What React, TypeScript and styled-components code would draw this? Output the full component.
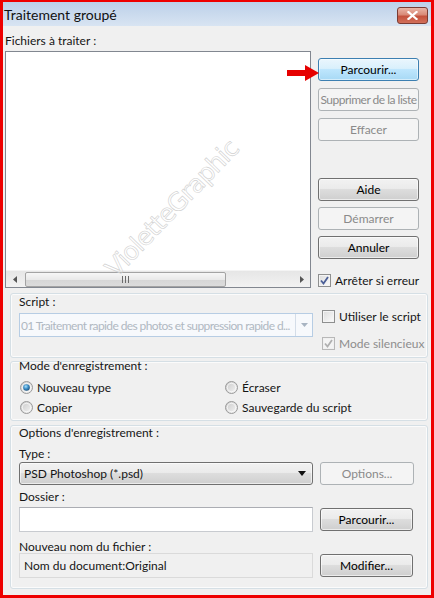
import React from "react";
import styled, { createGlobalStyle, css } from "styled-components";

const GlobalStyle = createGlobalStyle`
  html, body { margin: 0; padding: 0; background: #fff; }
  body { font-family: Lato, "Noto Sans", sans-serif; font-size: 12px; color: #151515; }
  * { box-sizing: border-box; }
`;

const Frame = styled.div`
  position: relative;
  width: 434px;
  height: 598px;
  border: 3px solid #ee0000;
  border-top-width: 2px;
  background: #f0f0f0;
  overflow: hidden;
`;

const TitleBar = styled.div`
  height: 24px;
  display: flex;
  align-items: center;
  justify-content: space-between;
  padding: 0 3px 0 1px;
  background: linear-gradient(#bcd0e9, #d8e4f2);
`;

const TitleText = styled.span`
  font-size: 14px;
  color: #111;
`;

const CloseButton = styled.div`
  width: 31px;
  height: 17px;
  border: 1px solid #7a3b33;
  border-radius: 3px;
  background: linear-gradient(#eab4a6 0%, #d98a78 45%, #c4513d 55%, #d2705a 100%);
  display: flex;
  align-items: center;
  justify-content: center;
  margin-top: 2px;
`;

const Body = styled.div`
  padding: 7px 5px 0 2px;
`;

const Label = styled.div<{ $mt?: number }>`
  height: 15px;
  line-height: 15px;
  white-space: nowrap;
  margin-top: ${(p) => p.$mt ?? 0}px;
`;

const TopSection = styled.div`
  display: grid;
  grid-template-columns: 306px 101px;
  column-gap: 7px;
  margin-top: 3px;
`;

const ListBox = styled.div`
  position: relative;
  height: 237px;
  border: 1px solid #828790;
  background: #fff;
  display: flex;
  flex-direction: column;
  justify-content: flex-end;
  overflow: hidden;
`;

const Watermark = styled.div`
  position: absolute;
  z-index: 2;
  left: 104px;
  top: 206px;
  font-family: "DejaVu Sans", sans-serif;
  font-size: 25px;
  line-height: 29px;
  color: transparent;
  -webkit-text-stroke: 0.6px #d0d0d0;
  transform: rotate(-46deg);
  transform-origin: left center;
  white-space: nowrap;
  letter-spacing: -1px;
  pointer-events: none;
`;

const ScrollBar = styled.div`
  position: relative;
  height: 17px;
  display: flex;
  align-items: center;
  background: linear-gradient(#e6e6e6, #f2f2f2);
  border-top: 1px solid #f4f4f4;
`;

const ArrowCell = styled.div`
  width: 17px;
  height: 17px;
  display: flex;
  align-items: center;
  justify-content: center;
`;

const Thumb = styled.div`
  width: 201px;
  height: 15px;
  margin-left: 2px;
  border: 1px solid #a3a3a3;
  border-radius: 2px;
  background: linear-gradient(#f6f6f6 0%, #e9e9e9 50%, #d6d6d6 52%, #dcdcdc 100%);
  display: flex;
  align-items: center;
  justify-content: center;
`;

const Spacer = styled.div`
  flex: 1;
`;

const RightColumn = styled.div`
  display: flex;
  flex-direction: column;
  padding-top: 7px;
`;

const ButtonStack = styled.div<{ $gap: number; $mt?: number }>`
  display: flex;
  flex-direction: column;
  gap: ${(p) => p.$gap}px;
  margin-top: ${(p) => p.$mt ?? 0}px;
`;

type Variant = "normal" | "default" | "disabled";

const Button = styled.div<{ $variant?: Variant; $w?: number; $tight?: boolean }>`
  width: ${(p) => (p.$w ? `${p.$w}px` : "100%")};
  height: 23px;
  border-radius: 3px;
  display: flex;
  align-items: center;
  justify-content: center;
  white-space: nowrap;
  letter-spacing: ${(p) => (p.$tight ? "-0.5px" : "0")};
  ${(p) =>
    p.$variant === "default"
      ? css`
          border: 1px solid #3c7fb1;
          background: linear-gradient(#eaf6fd 0%, #d9f0fc 45%, #bee6fd 50%, #a7d9f5 100%);
          box-shadow: inset 0 0 0 1px rgba(255, 255, 255, 0.5);
          color: #000;
        `
      : p.$variant === "disabled"
      ? css`
          border: 1px solid #adb2b5;
          background: #f4f4f4;
          color: #8a8a8a;
        `
      : css`
          border: 1px solid #707070;
          background: linear-gradient(#f2f2f2 0%, #ebebeb 45%, #dddddd 50%, #cfcfcf 100%);
          box-shadow: inset 0 0 0 1px rgba(255, 255, 255, 0.6);
          color: #000;
        `}
`;

const CheckRow = styled.div<{ $disabled?: boolean }>`
  display: flex;
  align-items: center;
  gap: 4px;
  height: 15px;
  white-space: nowrap;
  color: ${(p) => (p.$disabled ? "#8d8d8d" : "#151515")};
`;

const CheckBoxBox = styled.span<{ $disabled?: boolean }>`
  width: 13px;
  height: 13px;
  border: 1px solid ${(p) => (p.$disabled ? "#b8b8b8" : "#8e8f8f")};
  background: ${(p) =>
    p.$disabled ? "#f4f4f4" : "linear-gradient(135deg, #dcdcdc, #fbfbfb)"};
  box-shadow: inset 0 0 0 1px ${(p) => (p.$disabled ? "#f0f0f0" : "#f4f4f4")};
  display: flex;
  align-items: center;
  justify-content: center;
  flex-shrink: 0;
`;

const Group = styled.div<{ $h: number; $mt: number }>`
  margin: ${(p) => p.$mt}px 0 0 5px;
  width: 418px;
  height: ${(p) => p.$h}px;
  border: 1px solid #d5dfe5;
  border-radius: 3px;
  box-shadow: inset 0 0 0 1px #fbfbfb;
  padding: 0 0 0 8px;
`;

const ScriptGrid = styled.div`
  display: grid;
  grid-template-columns: 294px 1fr;
  column-gap: 9px;
  margin-top: 4px;
`;

const ComboDisabled = styled.div`
  height: 24px;
  border: 1px solid #b7cde4;
  background: #f7f9fc;
  display: flex;
  align-items: center;
  color: #b0b8c2;
  white-space: nowrap;
  overflow: hidden;
  padding-left: 1px;
  letter-spacing: -0.6px;
`;

const ComboText = styled.span`
  flex: 1;
  overflow: hidden;
`;

const ComboArrow = styled.div`
  width: 17px;
  height: 100%;
  border-left: 1px solid #d4dde8;
  display: flex;
  align-items: center;
  justify-content: center;
`;

const ScriptChecks = styled.div`
  display: flex;
  flex-direction: column;
  gap: 12px;
  margin-top: -4px;
`;

const RadioGrid = styled.div`
  display: grid;
  grid-template-columns: 205px 1fr;
  row-gap: 5px;
  margin-top: 7px;
  padding-left: 1px;
`;

const RadioRow = styled.div`
  display: flex;
  align-items: center;
  gap: 4px;
  height: 15px;
  white-space: nowrap;
`;

const FieldRow = styled.div<{ $mt?: number }>`
  display: grid;
  grid-template-columns: 294px auto;
  column-gap: 7px;
  align-items: center;
  margin-top: ${(p) => p.$mt ?? 0}px;
`;

const SelectBox = styled.div`
  height: 23px;
  border: 1px solid #707070;
  border-radius: 3px;
  background: linear-gradient(#f2f2f2 0%, #ebebeb 45%, #dddddd 50%, #cfcfcf 100%);
  box-shadow: inset 0 0 0 1px rgba(255, 255, 255, 0.6);
  display: flex;
  align-items: center;
  padding: 0 6px 0 4px;
  justify-content: space-between;
`;

const TextInput = styled.div`
  height: 25px;
  border: 1px solid #c8cbd0;
  border-top-color: #abadb3;
  background: #fff;
`;

const ReadOnlyField = styled.div`
  height: 25px;
  border: 1px solid #dadada;
  background: #f0f0f0;
  display: flex;
  align-items: center;
  padding-left: 4px;
`;

const RedArrow = styled.svg`
  position: absolute;
  left: 284px;
  top: 63px;
`;

const CheckMark = ({ color }: { color: string }) => (
  <svg width="9" height="9" viewBox="0 0 9 9">
    <path d="M1 4.5 L3.5 7.5 L8 1" fill="none" stroke={color} strokeWidth="1.8" />
  </svg>
);

const CheckBox = ({
  checked,
  disabled,
  label,
}: {
  checked?: boolean;
  disabled?: boolean;
  label: string;
}) => (
  <CheckRow $disabled={disabled}>
    <CheckBoxBox $disabled={disabled}>
      {checked && <CheckMark color={disabled ? "#b0b0b0" : "#4b5f97"} />}
    </CheckBoxBox>
    {label}
  </CheckRow>
);

const Radio = ({ checked, label }: { checked?: boolean; label: string }) => (
  <RadioRow>
    <svg width="13" height="13" viewBox="0 0 13 13">
      <defs>
        <linearGradient id="rg" x1="0" y1="0" x2="1" y2="1">
          <stop offset="0" stopColor="#c8c8c8" />
          <stop offset="1" stopColor="#f6f6f6" />
        </linearGradient>
        <radialGradient id="rdot" cx="0.4" cy="0.35" r="0.7">
          <stop offset="0" stopColor="#a9e1fb" />
          <stop offset="0.5" stopColor="#3c8fc9" />
          <stop offset="1" stopColor="#1c4e76" />
        </radialGradient>
      </defs>
      <circle cx="6.5" cy="6.5" r="6" fill="url(#rg)" stroke="#9a9a9a" strokeWidth="1" />
      <circle cx="6.5" cy="6.5" r="4.2" fill="none" stroke="#fafafa" strokeWidth="0.8" />
      {checked && <circle cx="6.5" cy="6.5" r="3.3" fill="url(#rdot)" />}
    </svg>
    {label}
  </RadioRow>
);

export default function App() {
  return (
    <>
      <GlobalStyle />
      <Frame>
        <TitleBar>
          <TitleText>Traitement groupé</TitleText>
          <CloseButton>
            <svg width="11" height="9" viewBox="0 0 11 9">
              <path d="M1.5 1 L9.5 8 M9.5 1 L1.5 8" stroke="#fff" strokeWidth="2.2" strokeLinecap="square" />
            </svg>
          </CloseButton>
        </TitleBar>
        <Body>
          <Label>Fichiers à traiter :</Label>
          <TopSection>
            <ListBox>
              <Watermark>VioletteGraphic</Watermark>
              <ScrollBar>
                <ArrowCell>
                  <svg width="4" height="7" viewBox="0 0 4 7">
                    <path d="M4 0 L0 3.5 L4 7 Z" fill="#555" />
                  </svg>
                </ArrowCell>
                <Thumb>
                  <svg width="7" height="7" viewBox="0 0 7 7">
                    <path d="M0.5 0 V7 M3.5 0 V7 M6.5 0 V7" stroke="#6b6b6b" strokeWidth="1" />
                  </svg>
                </Thumb>
                <Spacer />
                <ArrowCell>
                  <svg width="4" height="7" viewBox="0 0 4 7">
                    <path d="M0 0 L4 3.5 L0 7 Z" fill="#555" />
                  </svg>
                </ArrowCell>
              </ScrollBar>
            </ListBox>
            <RightColumn>
              <ButtonStack $gap={7}>
                <Button $variant="default">Parcourir...</Button>
                <Button $variant="disabled" $tight>Supprimer de la liste</Button>
                <Button $variant="disabled">Effacer</Button>
              </ButtonStack>
              <ButtonStack $gap={6} $mt={37}>
                <Button>Aide</Button>
                <Button $variant="disabled">Démarrer</Button>
                <Button>Annuler</Button>
              </ButtonStack>
              <ButtonStack $gap={0} $mt={14}>
                <CheckBox checked label="Arrêter si erreur" />
              </ButtonStack>
            </RightColumn>
          </TopSection>
          <Group $h={65} $mt={5}>
            <Label $mt={0}>Script :</Label>
            <ScriptGrid>
              <ComboDisabled>
                <ComboText>01 Traitement rapide des photos et suppression rapide d...</ComboText>
                <ComboArrow>
                  <svg width="7" height="4" viewBox="0 0 7 4">
                    <path d="M0 0 H7 L3.5 4 Z" fill="#a8b4c2" />
                  </svg>
                </ComboArrow>
              </ComboDisabled>
              <ScriptChecks>
                <CheckBox label="Utiliser le script" />
                <CheckBox checked disabled label="Mode silencieux" />
              </ScriptChecks>
            </ScriptGrid>
          </Group>
          <Group $h={60} $mt={3}>
            <Label $mt={-4}>Mode d'enregistrement :</Label>
            <RadioGrid>
              <Radio checked label="Nouveau type" />
              <Radio label="Écraser" />
              <Radio label="Copier" />
              <Radio label="Sauvegarde du script" />
            </RadioGrid>
          </Group>
          <Group $h={164} $mt={4}>
            <Label $mt={-1}>Options d'enregistrement :</Label>
            <Label $mt={6}>Type :</Label>
            <FieldRow $mt={1}>
              <SelectBox>
                <span>PSD Photoshop (*.psd)</span>
                <svg width="8" height="5" viewBox="0 0 8 5">
                  <path d="M0 0 H8 L4 5 Z" fill="#111" />
                </svg>
              </SelectBox>
              <Button $variant="disabled" $w={94}>Options...</Button>
            </FieldRow>
            <Label $mt={4}>Dossier :</Label>
            <FieldRow $mt={3}>
              <TextInput />
              <Button $w={93}>Parcourir...</Button>
            </FieldRow>
            <Label $mt={7}>Nouveau nom du fichier :</Label>
            <FieldRow $mt={-1}>
              <ReadOnlyField>Nom du document:Original</ReadOnlyField>
              <Button $w={93}>Modifier...</Button>
            </FieldRow>
          </Group>
        </Body>
        <RedArrow width="32" height="16" viewBox="0 0 32 16">
          <path d="M0 5 H18 V0 L32 8 L18 16 V11 H0 Z" fill="#e60000" />
        </RedArrow>
      </Frame>
    </>
  );
}
